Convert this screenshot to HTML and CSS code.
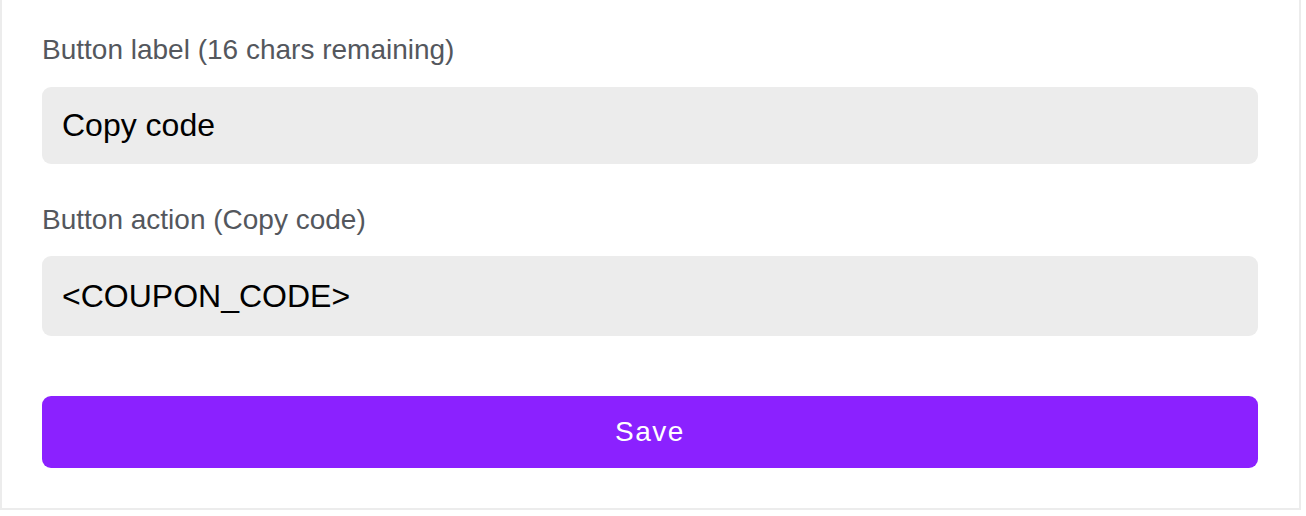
FILE: index.html
```html
<!DOCTYPE html>
<html lang="en">
<head>
  <meta charset="UTF-8">
  <meta name="viewport" content="width=device-width, initial-scale=1.0">
  <title>Button settings</title>
  <link rel="stylesheet" href="styles.css">
</head>
<body>
  <form class="button-form">
    <div class="field">
      <label class="field-label" for="buttonLabel">Button label (16 chars remaining)</label>
      <input class="field-input" id="buttonLabel" type="text" value="Copy code">
    </div>
    <div class="field">
      <label class="field-label" for="buttonAction">Button action (Copy code)</label>
      <input class="field-input" id="buttonAction" type="text" value="<COUPON_CODE>">
    </div>
    <button class="save-button" type="button">Save</button>
  </form>
</body>
</html>
```

FILE: styles.css
```css
/* General Body Styles */
body {
  margin: 0;
  font-family: 'Liberation Sans', Arial, sans-serif;
  background: #ffffff;
}

.button-form {
  width: 1301px;
  box-sizing: border-box;
  padding: 34px 41px 40px 40px;
  border: 2px solid #ececec;
  border-top: none;
  display: flex;
  flex-direction: column;
}

/* Fields */
.field {
  display: flex;
  flex-direction: column;
  gap: 21px;
  margin-bottom: 40px;
}

.field + .field {
  gap: 20px;
}

.field-label {
  font-size: 28px;
  line-height: 32px;
  color: #54575d;
}

.field-input {
  height: 77px;
  box-sizing: border-box;
  padding: 0 20px;
  border: none;
  border-radius: 9px;
  background-color: #ececec;
  font-family: inherit;
  font-size: 32px;
  color: #000000;
  outline: none;
}

.field + .field .field-input {
  height: 80px;
}

.field:last-of-type {
  margin-bottom: 60px;
}

/* Save Button */
.save-button {
  height: 72px;
  border: none;
  border-radius: 9px;
  background-color: #8b21ff;
  color: #ffffff;
  font-family: inherit;
  font-size: 28px;
  letter-spacing: 1.5px;
  cursor: pointer;
}
```
